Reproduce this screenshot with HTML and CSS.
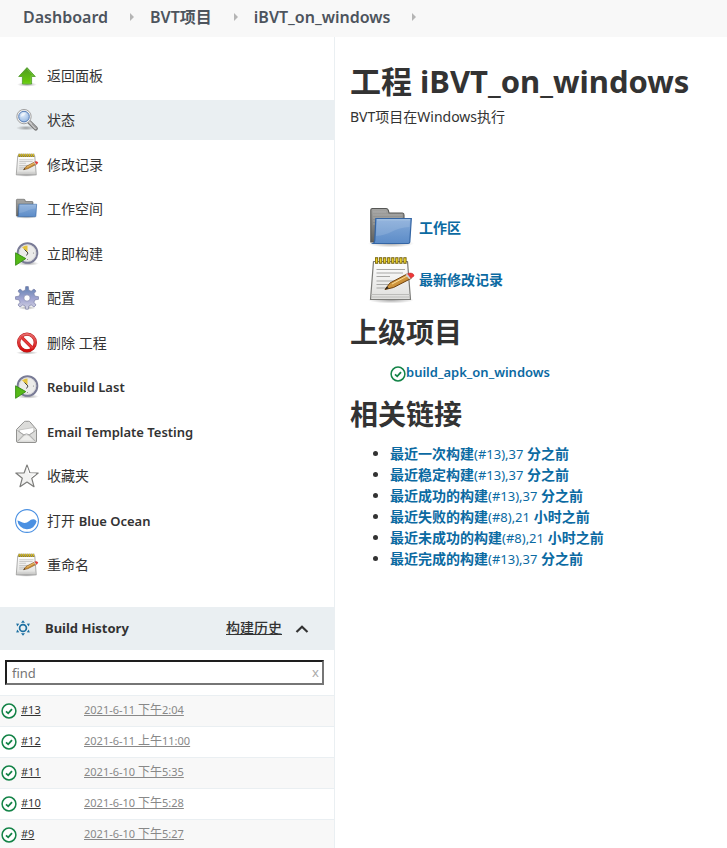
FILE: index.html
```html
<!DOCTYPE html>
<html lang="zh-CN">
<head>
<meta charset="utf-8">
<title>iBVT_on_windows [Jenkins]</title>
<link rel="stylesheet" href="styles.css">
</head>
<body>
<svg class="sprite" aria-hidden="true">
  <defs>
    <linearGradient id="g-green" x1="0" y1="0" x2="0" y2="1"><stop offset="0" stop-color="#4e9a24"/><stop offset="1" stop-color="#69cf08"/></linearGradient>
    <linearGradient id="g-paper" x1="0" y1="0" x2="0" y2="1"><stop offset="0" stop-color="#fff"/><stop offset="1" stop-color="#dededc"/></linearGradient>
    <linearGradient id="g-folder" x1="0" y1="0" x2="0" y2="1"><stop offset="0" stop-color="#86abd9"/><stop offset="1" stop-color="#5c8cc8"/></linearGradient>
    <linearGradient id="g-gray" x1="0" y1="0" x2="0" y2="1"><stop offset="0" stop-color="#a5a5a3"/><stop offset="1" stop-color="#5f605e"/></linearGradient>
    <linearGradient id="g-red" x1="0" y1="0" x2="0" y2="1"><stop offset="0" stop-color="#e86a6a"/><stop offset="1" stop-color="#d30d0d"/></linearGradient>
    <linearGradient id="g-gear" x1="0" y1="0" x2="0" y2="1"><stop offset="0" stop-color="#5f80b0"/><stop offset=".55" stop-color="#a3a6d2"/><stop offset="1" stop-color="#d4d4e2"/></linearGradient>
    <linearGradient id="g-pencil" x1="0" y1="0" x2="1" y2="1"><stop offset="0" stop-color="#f0bd62"/><stop offset="1" stop-color="#b0701b"/></linearGradient>
    <radialGradient id="g-lens" cx=".4" cy=".3" r=".8"><stop offset="0" stop-color="#e4effb"/><stop offset="1" stop-color="#8fb3e0"/></radialGradient>
    <radialGradient id="g-shadow"><stop offset="0" stop-color="#000" stop-opacity=".35"/><stop offset="1" stop-color="#000" stop-opacity="0"/></radialGradient>
  </defs>
  <symbol id="i-up" viewBox="0 0 24 24">
    <ellipse cx="12" cy="20.500" rx="10" ry="2.200" fill="url(#g-shadow)"/>
    <path d="M12 3.600 20.300 12.500H16.600V20H7.400V12.500H3.700Z" fill="url(#g-green)" stroke="#4f9b2c" stroke-width=".8" stroke-linejoin="round"/>
    <path d="M12 5 18.300 11.700H15.800V19.200H8.200" fill="none" stroke="#91d55f" stroke-width=".6" opacity=".7"/>
  </symbol>
  <symbol id="i-search" viewBox="0 0 24 24">
    <ellipse cx="11" cy="20" rx="10" ry="2.400" fill="url(#g-shadow)"/>
    <path d="M14.200 14 20.800 20.600" stroke="#777" stroke-width="4.200" stroke-linecap="round"/>
    <path d="M14.500 14 20.500 20.200" stroke="#c9c9c9" stroke-width="2.200" stroke-linecap="round"/>
    <path d="M17.500 16 21 19.600" stroke="#999" stroke-width="1.200" stroke-linecap="round"/>
    <circle cx="9" cy="8.600" r="7.200" fill="#eee" stroke="#9b9b9b" stroke-width=".9"/>
    <circle cx="9" cy="8.600" r="5.300" fill="url(#g-lens)" stroke="#587fb8" stroke-width="1"/>
    <path d="M5.500 9C6 5.800 8 4.500 11 4.700 10 7 8 8 5.500 9Z" fill="#fff" opacity=".5"/>
  </symbol>
  <symbol id="i-note" viewBox="0 0 48 48">
    <ellipse cx="23" cy="44" rx="23" ry="3.500" fill="url(#g-shadow)"/>
    <path d="M5.500 5.500H39.500L42.500 43.500H2.500Z" fill="url(#g-paper)" stroke="#7b7b78" stroke-width="1.200" stroke-linejoin="round"/>
    <path d="M3.500 38.500H41.500M3.200 41H42" stroke="#bcbcba" stroke-width="1"/>
    <path d="M8.500 13.500H37M8.500 17H35M8.500 20.500H22M8.500 25H28M8.500 28.500H22M8.500 32H20" stroke="#a7a7a5" stroke-width="1.100"/>
    <path d="M7 4.500H39" stroke="#6f5b00" stroke-width="6.500" stroke-dasharray="3.200 .85"/>
    <path d="M7.700 4.500H39" stroke="#e8cf2c" stroke-width="4.700" stroke-dasharray="1.700 2.350"/>
    <path d="M17 33.500 22 27 39 18 43 22.500 25.500 31.500Z" fill="url(#g-pencil)" stroke="#70410d" stroke-width="1"/>
    <path d="M17 33.500 19 30.500 20.800 32.200Z" fill="#222"/>
    <path d="M24 28 39 20" stroke="#f9dc98" stroke-width="1"/>
    <path d="M37.500 18.800 40 17.500 44 21.500 41.300 23.300Z" fill="#ccd2d8"/>
    <path d="M39.500 17.700C43 16.300 46 17.500 46 20L43 22.300Z" fill="#ef3838" stroke="#b42020" stroke-width=".5"/>
  </symbol>
  <symbol id="i-folder" viewBox="0 0 48 48">
    <ellipse cx="23" cy="39.500" rx="23" ry="4" fill="url(#g-shadow)"/>
    <path d="M2.800 38V6.200Q2.800 4.500 4.500 4.500H18Q20 4.500 20.500 7L21 9H34.500Q36 9 36 11V38Z" fill="url(#g-gray)" stroke="#565755" stroke-width="1.100"/>
    <path d="M5 8H18M5 11H34M5 14H34M5 17H7M5 20H7" stroke="#bababa" stroke-width=".8" opacity=".7"/>
    <path d="M7.800 14.500H43.300L41.800 38Q41.700 39.500 40 39.500H5Q6.700 38.500 6.800 36.500Z" fill="url(#g-folder)" stroke="#3465a4" stroke-width="1.200"/>
    <path d="M9 16H42L41.500 23C27 23 21 32 8 32Z" fill="#fff" opacity=".13"/>
    <path d="M8.800 15.800H42" stroke="#b4cee9" stroke-width=".8"/>
  </symbol>
  <symbol id="i-build" viewBox="0 0 24 24">
    <ellipse cx="13" cy="21.500" rx="11" ry="2.200" fill="url(#g-shadow)"/>
    <circle cx="12.500" cy="11" r="9.800" fill="#ececea" stroke="#797b96" stroke-width="2"/>
    <circle cx="12.500" cy="11" r="8.300" fill="none" stroke="#c8c8cc" stroke-width=".6"/>
    <path d="M12.500 10 7 5.600C8.500 4.200 10.500 3.500 12.500 3.500Z" fill="#e5c43e"/>
    <path d="M9.500 7.500 13 11 11.500 13.500" fill="none" stroke="#333" stroke-width=".9"/>
    <circle cx="18.500" cy="11" r=".6" fill="#888"/><circle cx="12.500" cy="17.500" r=".6" fill="#888"/>
    <path d="M.6 10.800 10.800 16.600.6 23.300Z" fill="#55b918" stroke="#348a12" stroke-width=".9"/>
  </symbol>
  <symbol id="i-gear" viewBox="0 0 24 24">
    <ellipse cx="12" cy="21.800" rx="9" ry="2" fill="url(#g-shadow)"/>
    <path fill-rule="evenodd" d="M10.200 4.200 10.700.6H13.300L13.800 4.200 16.200 5.200 19 3 21 5 18.900 7.800 20 10.200 23.500 10.700V13.300L20 13.800 18.900 16.200 21 19 19 21 16.200 18.900 13.800 20 13.300 23.200H10.700L10.200 20 7.800 18.900 5 21 3 19 5.100 16.200 4 13.800.5 13.300V10.700L4 10.200 5.100 7.800 3 5 5 3 7.800 5.200ZM12 8.800A3.200 3.200 0 1 0 12 15.200 3.200 3.200 0 1 0 12 8.800Z" fill="url(#g-gear)" stroke="#7b80a8" stroke-width=".7" stroke-linejoin="round"/>
  </symbol>
  <symbol id="i-delete" viewBox="0 0 24 24">
    <ellipse cx="12" cy="21.700" rx="11" ry="1.800" fill="url(#g-shadow)"/>
    <circle cx="12" cy="11.500" r="8.300" fill="#fff" stroke="#b71919" stroke-width="3.300"/>
    <path d="M6.200 5.800 17.800 17.300" stroke="#c92020" stroke-width="3.200"/>
    <circle cx="12" cy="11.500" r="8.300" fill="none" stroke="url(#g-red)" stroke-width="2.300"/>
    <path d="M6.200 5.800 17.800 17.300" stroke="#e13b3b" stroke-width="2.200"/>
  </symbol>
  <symbol id="i-mail" viewBox="0 0 24 24">
    <path d="M1.500 9.500 9 1.900Q9.500 1.300 10.300 1.300H13.700Q14.500 1.300 15 1.900L21.500 9.500V21Q21.500 22.500 20 22.500H3Q1.500 22.500 1.500 21Z" fill="#dcdcda" stroke="#929290" stroke-width="1" stroke-linejoin="round"/>
    <path d="M4 10 18.800 7.500V12L13.800 15H9.500L5 12.500Z" fill="#fff" stroke="#b6b6b4" stroke-width=".7"/>
    <path d="M2.500 21.300 8.800 14.800Q11.500 12.900 14.200 14.800L20.500 21.300M2.500 10.500 8.800 15M20.500 10.500 14.200 15" fill="none" stroke="#9b9b99" stroke-width=".8"/>
    <path d="M5 20.500 9.500 15.900Q11.500 14.400 13.500 15.900L18 20.500Z" fill="#eeeeec"/>
  </symbol>
  <symbol id="i-star" viewBox="0 0 24 24">
    <path d="M12 1 14.800 8.800 23.200 9 16.700 14.200 19 22.700 12 18 5 22.700 7.300 14.200.8 9 9.200 8.800Z" fill="#f2f2f1" stroke="#7c7c7a" stroke-width="1.200" stroke-linejoin="round"/>
    <path d="M12 3.500 14 9.700 20.500 10 15.500 13.900" fill="none" stroke="#fff" stroke-width="1"/>
  </symbol>
  <symbol id="i-ocean" viewBox="0 0 24 24">
    <circle cx="12" cy="12" r="11.400" fill="#fff" stroke="#4a90e2" stroke-width="1.100"/>
    <path d="M2.400 11.500C5 11.800 6.500 13.900 9.500 13.900 13.500 13.900 14.500 10.300 18.300 10.200 19.600 10.100 20.600 10.800 21.600 12.300A9.700 9.700 0 0 1 2.400 11.500Z" fill="#4a90e2"/>
  </symbol>
  <symbol id="i-ok" viewBox="0 0 16 16">
    <circle cx="8" cy="8" r="6.900" fill="#fff" stroke="#138347" stroke-width="1.500"/>
    <path d="M5 8.300 7.200 10.300 11 6.100" fill="none" stroke="#138347" stroke-width="1.800"/>
  </symbol>
  <symbol id="i-sun" viewBox="0 0 16 16">
    <circle cx="8" cy="8" r="3.400" fill="none" stroke="#1d70a2" stroke-width="1.700"/>
    <path d="M8 .3 10 2.800H6ZM8 15.700 10 13.200H6ZM1.200 3.400 4.300 3.700 2.200 6.500ZM14.800 3.400 11.700 3.700 13.800 6.500ZM1.200 12.600 4.300 12.300 2.200 9.500ZM14.800 12.600 11.700 12.300 13.800 9.500Z" fill="#1d70a2"/>
  </symbol>
</svg>

<nav class="breadcrumbs" aria-label="Breadcrumb">
  <a href="#">Dashboard</a><i class="arrow"></i>
  <a href="#">BVT项目</a><i class="arrow"></i>
  <a href="#">iBVT_on_windows</a><i class="arrow"></i>
</nav>

<div class="page">
  <aside class="side">
    <nav class="tasks">
      <a href="#"><svg><use href="#i-up"/></svg>返回面板</a>
      <a href="#" class="active"><svg><use href="#i-search"/></svg>状态</a>
      <a href="#"><svg><use href="#i-note"/></svg>修改记录</a>
      <a href="#"><svg><use href="#i-folder"/></svg>工作空间</a>
      <a href="#"><svg><use href="#i-build"/></svg>立即构建</a>
      <a href="#"><svg><use href="#i-gear"/></svg>配置</a>
      <a href="#"><svg><use href="#i-delete"/></svg>删除 工程</a>
      <a href="#"><svg><use href="#i-build"/></svg><b>Rebuild Last</b></a>
      <a href="#"><svg><use href="#i-mail"/></svg><b>Email Template Testing</b></a>
      <a href="#"><svg><use href="#i-star"/></svg>收藏夹</a>
      <a href="#"><svg><use href="#i-ocean"/></svg><span>打开 <b>Blue Ocean</b></span></a>
      <a href="#"><svg><use href="#i-note"/></svg>重命名</a>
    </nav>

    <section class="history">
      <header class="history-head">
        <svg class="sun"><use href="#i-sun"/></svg>
        <h2>Build History</h2>
        <a href="#">构建历史</a>
        <button type="button" class="collapse" aria-label="collapse"><svg viewBox="0 0 14 14"><path d="M1.500 10 7 4.800 12.500 10" fill="none" stroke="#333" stroke-width="2.200"/></svg></button>
      </header>
      <div class="find">
        <input type="text" placeholder="find" aria-label="find">
        <button type="button" class="clear">x</button>
      </div>
      <table class="builds">
        <tr><td><svg class="ok"><use href="#i-ok"/></svg><a href="#">#13</a></td><td><a href="#">2021-6-11 <span>下午</span>2:04</a></td></tr>
        <tr><td><svg class="ok"><use href="#i-ok"/></svg><a href="#">#12</a></td><td><a href="#">2021-6-11 <span>上午</span>11:00</a></td></tr>
        <tr><td><svg class="ok"><use href="#i-ok"/></svg><a href="#">#11</a></td><td><a href="#">2021-6-10 <span>下午</span>5:35</a></td></tr>
        <tr><td><svg class="ok"><use href="#i-ok"/></svg><a href="#">#10</a></td><td><a href="#">2021-6-10 <span>下午</span>5:28</a></td></tr>
        <tr><td><svg class="ok"><use href="#i-ok"/></svg><a href="#">#9</a></td><td><a href="#">2021-6-10 <span>下午</span>5:27</a></td></tr>
      </table>
    </section>
  </aside>

  <main class="main">
    <h1>工程 iBVT_on_windows</h1>
    <p class="description">BVT项目在Windows执行</p>
    <div class="shortcuts">
      <a href="#"><svg><use href="#i-folder"/></svg>工作区</a>
      <a href="#"><svg><use href="#i-note"/></svg>最新修改记录</a>
    </div>
    <h2>上级项目</h2>
    <ul class="upstream">
      <li><a href="#"><svg class="ok"><use href="#i-ok"/></svg>build_apk_on_windows</a></li>
    </ul>
    <h2>相关链接</h2>
    <ul class="permalinks">
      <li><a href="#">最近一次构建<span>(#13),37</span> 分之前</a></li>
      <li><a href="#">最近稳定构建<span>(#13),37</span> 分之前</a></li>
      <li><a href="#">最近成功的构建<span>(#13),37</span> 分之前</a></li>
      <li><a href="#">最近失败的构建<span>(#8),21</span> 小时之前</a></li>
      <li><a href="#">最近未成功的构建<span>(#8),21</span> 小时之前</a></li>
      <li><a href="#">最近完成的构建<span>(#13),37</span> 分之前</a></li>
    </ul>
  </main>
</div>
</body>
</html>
```
FILE: styles.css
```css
* { box-sizing: border-box; }
body {
  margin: 0;
  background: #fff;
  color: #333;
  font: 14px/20px "Noto Sans", "Noto Sans CJK SC", sans-serif;
}
a { color: inherit; text-decoration: none; }
h1, h2, p, ul { margin: 0; }
.sprite { position: absolute; width: 0; height: 0; }

.breadcrumbs {
  display: flex;
  align-items: center;
  height: 37px;
  padding: 0 23px 3px;
  background: #f8f8f8;
  color: #4d545d;
  font-size: 16px;
  font-weight: 600;
}
.arrow {
  margin: 0 16px 0 22px;
  border: 4px solid transparent;
  border-left-color: #b5b5b5;
  border-right: 0;
}

.page {
  display: grid;
  grid-template-columns: 335px 1fr;
  min-height: calc(100vh - 37px);
}
.side { border-right: 1px solid #eaeff2; }

.tasks { padding: 19px 0 17px; }
.tasks a {
  display: flex;
  align-items: center;
  gap: 8px;
  height: 40px;
  margin-bottom: 4px;
  padding-left: 15px;
}
.tasks a:nth-child(even) { margin-bottom: 5px; }
.tasks svg { width: 24px; height: 24px; }
.tasks .active { background: #eaeff2; }
.tasks b { font-size: 13px; font-weight: 600; }

.history-head {
  display: flex;
  align-items: center;
  height: 43px;
  padding: 0 25px 2px 15px;
  background: #eaeff2;
}
.history-head h2 {
  flex: 1;
  margin-left: 14px;
  font-size: 13px;
  line-height: 20px;
  font-weight: 700;
}
.history-head a { text-decoration: underline; font-weight: 500; }
.sun { width: 16px; height: 16px; }
.collapse { margin-left: 13px; padding: 2px 0 0; border: 0; background: none; line-height: 0; }
.collapse svg { width: 14px; height: 14px; }

.find { position: relative; padding: 10px 10px 10px 5px; }
.find input {
  display: block;
  width: 100%;
  height: 25px;
  padding: 0 5px;
  border: 2px solid;
  border-color: #1e1e1e #767676 #767676 #1e1e1e;
  background: #fff;
  font: inherit;
  font-size: 13px;
}
.find input::placeholder { color: #757575; }
.clear {
  position: absolute;
  top: 12px;
  right: 15px;
  padding: 0;
  border: 0;
  background: none;
  color: #aaa;
  font: 13px/20px "Noto Sans", sans-serif;
}

.builds { width: 100%; border-collapse: collapse; font-size: 11px; }
.builds tr { height: 31px; border-top: 1px solid #eaeff2; }
.builds tr:nth-child(odd) { background: #f8f8f8; }
.builds td { padding: 0 0 2px; }
.builds td:first-child { width: 84px; padding-left: 1px; }
.builds td:last-child { color: #888; }
.builds a { text-decoration: underline; }
.builds span { font-size: 12px; }
.ok { width: 16px; height: 16px; vertical-align: -5px; }
.builds .ok { margin-right: 4px; }

.main { padding: 24px 15px; }
h1 { font-size: 31px; line-height: 40px; }
.description { margin-top: 6px; font-size: 14px; line-height: 20px; }
.shortcuts { padding: 75px 0 6px 18px; color: #0b6aa2; font-weight: 700; }
.shortcuts a { display: flex; align-items: center; gap: 3px; height: 52px; font-size: 14px; }
.shortcuts svg { width: 48px; height: 48px; }
.main h2 { font-size: 28px; line-height: 40px; }
.main ul { padding-left: 40px; color: #333; }
.main li a { color: #0b6aa2; font-weight: 700; }
.main .upstream { margin: 10px 0 12px; list-style: none; }
.main .upstream a { font-size: 13px; font-weight: 600; }
.permalinks { margin-top: 8px; }
.permalinks li { line-height: 21px; }
.main .permalinks { margin-top: 9px; }
.permalinks span { font-weight: 400; font-size: 13px; line-height: 16px; }
```
